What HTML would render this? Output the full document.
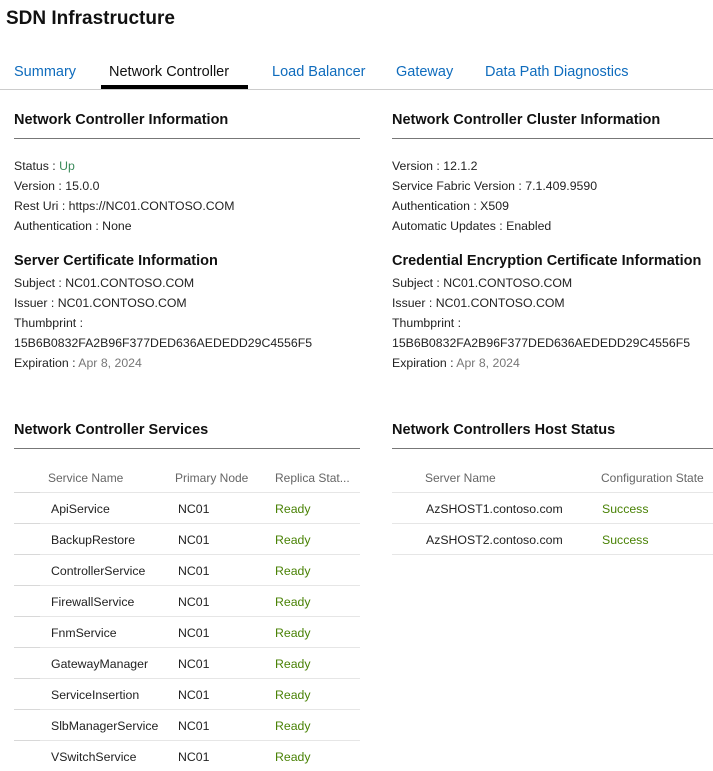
<!DOCTYPE html>
<html><head><style>
body{margin:0;width:713px;height:771px;overflow:hidden;background:#fff;font-family:"Liberation Sans",sans-serif;color:#222;position:relative}
.a{position:absolute;white-space:nowrap}
.t{font-size:12.3px;line-height:20px}
.h{font-size:14.5px;font-weight:bold;color:#111}
.tab{font-size:14.5px;color:#0f6cbd;top:64px}
.rule{position:absolute;height:1px;background:#777}
.g{color:#3a8a5a}
.r{color:#498205}
.gr{color:#777}
.th{font-size:12px;color:#666}
.row{position:absolute;height:1px;background:#e6e6e6}
</style></head><body>
<div class="a" style="left:6px;top:8px;font-size:19px;font-weight:bold;color:#111">SDN Infrastructure</div>
<div class="a tab" style="left:14px">Summary</div>
<div class="a tab" style="left:109px;color:#111">Network Controller</div>
<div class="a tab" style="left:272px">Load Balancer</div>
<div class="a tab" style="left:396px">Gateway</div>
<div class="a tab" style="left:485px">Data Path Diagnostics</div>
<div style="position:absolute;left:0;top:89px;width:713px;height:1px;background:#ccc"></div>
<div style="position:absolute;left:101px;top:85px;width:147px;height:4px;background:#000"></div>

<div class="a h" style="left:14px;top:112px">Network Controller Information</div>
<div class="rule" style="left:14px;top:138px;width:346px"></div>
<div class="a t" style="left:14px;top:156px">Status : <span class="g">Up</span><br>Version : 15.0.0<br>Rest Uri : https://NC01.CONTOSO.COM<br>Authentication : None</div>
<div class="a h" style="left:14px;top:253px">Server Certificate Information</div>
<div class="a t" style="left:14px;top:273px">Subject : NC01.CONTOSO.COM<br>Issuer : NC01.CONTOSO.COM<br>Thumbprint :<br>15B6B0832FA2B96F377DED636AEDEDD29C4556F5<br>Expiration : <span class="gr">Apr 8, 2024</span></div>

<div class="a h" style="left:392px;top:112px">Network Controller Cluster Information</div>
<div class="rule" style="left:392px;top:138px;width:321px"></div>
<div class="a t" style="left:392px;top:156px">Version : 12.1.2<br>Service Fabric Version : 7.1.409.9590<br>Authentication : X509<br>Automatic Updates : Enabled</div>
<div class="a h" style="left:392px;top:253px">Credential Encryption Certificate Information</div>
<div class="a t" style="left:392px;top:273px">Subject : NC01.CONTOSO.COM<br>Issuer : NC01.CONTOSO.COM<br>Thumbprint :<br>15B6B0832FA2B96F377DED636AEDEDD29C4556F5<br>Expiration : <span class="gr">Apr 8, 2024</span></div>

<div class="a h" style="left:14px;top:422px">Network Controller Services</div>
<div class="rule" style="left:14px;top:448px;width:346px"></div>
<div class="a th" style="left:48px;top:471px">Service Name</div>
<div class="a th" style="left:175px;top:471px">Primary Node</div>
<div class="a th" style="left:275px;top:471px">Replica Stat...</div>

<div class="a h" style="left:392px;top:422px">Network Controllers Host Status</div>
<div class="rule" style="left:392px;top:448px;width:321px"></div>
<div class="a th" style="left:425px;top:471px">Server Name</div>
<div class="a th" style="left:601px;top:471px">Configuration State</div>

<div id="rows"></div>
<script>
var s=["ApiService","BackupRestore","ControllerService","FirewallService","FnmService","GatewayManager","ServiceInsertion","SlbManagerService","VSwitchService"];
var h="";
for(var i=0;i<s.length;i++){var y=492+i*31;
h+='<div class="row" style="left:14px;top:'+y+'px;width:346px"></div><div class="row" style="left:14px;top:'+y+'px;width:26px;background:#d8d8d8"></div>';
h+='<div class="a t" style="left:51px;top:'+(y+7)+'px">'+s[i]+'</div><div class="a t" style="left:178px;top:'+(y+7)+'px">NC01</div><div class="a t r" style="left:275px;top:'+(y+7)+'px">Ready</div>';}
var hs=["AzSHOST1.contoso.com","AzSHOST2.contoso.com"];
for(var j=0;j<3;j++){var y=492+j*31;h+='<div class="row" style="left:392px;top:'+y+'px;width:321px"></div>';
if(j<2)h+='<div class="a t" style="left:426px;top:'+(y+7)+'px">'+hs[j]+'</div><div class="a t r" style="left:602px;top:'+(y+7)+'px">Success</div>';}
document.getElementById("rows").innerHTML=h;
</script>
</body></html>
